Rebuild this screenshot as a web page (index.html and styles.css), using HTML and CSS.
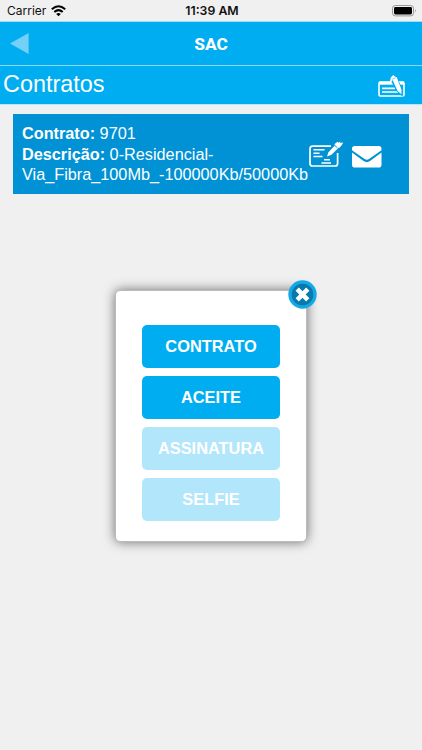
FILE: index.html
```html
<!DOCTYPE html>
<html lang="pt-BR">
<head>
<meta charset="utf-8">
<meta name="viewport" content="width=device-width, initial-scale=1">
<title>SAC</title>
<link rel="stylesheet" href="styles.css">
</head>
<body>
<div class="status">
  <div class="carrier"><span>Carrier</span>
    <svg class="wifi" width="15" height="12" viewBox="0 0 15 12" fill="none" stroke="#000" stroke-width="2"><path d="M.8 4.3Q7.5-1.8 14.2 4.3M3.3 7Q7.5 3.3 11.7 7"/><path d="M7.5 11.2 5.2 8.9Q7.5 7 9.8 8.9Z" fill="#000" stroke="none"/></svg>
  </div>
  <time class="clock">11:39 AM</time>
  <svg class="battery" width="25" height="12" viewBox="0 0 25 12"><rect x=".5" y=".5" width="21" height="10.4" rx="2.8" fill="none" stroke="#999"/><rect x="2" y="2" width="18" height="7.4" rx="1.4"/><path d="M23 4q1.5 1.7 0 3.4z" fill="#888"/></svg>
</div>
<header class="topbar">
  <svg class="back" width="19" height="22" viewBox="0 0 19 22"><path d="M0 10.5 18.6 0v21z" fill="#73d0f7"/></svg>
  <h1 class="title">SAC</h1>
</header>
<div class="subbar">
  <h2 class="heading">Contratos</h2>
  <svg class="sign" width="27" height="23" viewBox="0 0 27 23" fill="none" stroke="#fff"><rect x="1" y="7" width="25" height="14" rx="1.2" stroke-width="1.6"/><path d="M1.5 8.2H26" stroke-width="3"/><path d="M4 13.3h13M4 17h16" stroke-width="1.7"/><path d="m12.8 3.4 3.6-2.4 1.8 2 5 11.5.2 4.5-3.6-3.2z" fill="#fff" stroke="#00adf0" stroke-width="2.4"/><path d="m12.8 2.4 2.4-2.4 2 1.8 1.6.4 4.6 12.3.1 4.8-3.9-3.4L14.6 5l-2 3-.8-.6z" fill="#fff" stroke="none"/><path d="m14.2 4.3 3.3-1.4" stroke="#00adf0" stroke-width=".6"/></svg>
</div>
<main class="content">
  <article class="card">
    <div class="info">
      <p><b class="label">Contrato:</b> 9701</p>
      <p><b class="label">Descrição:</b> 0-Residencial-</p>
      <p>Via_Fibra_100Mb_-100000Kb/50000Kb</p>
    </div>
    <svg class="edit" width="35" height="27" viewBox="0 0 35 27" fill="none" stroke="#fff"><path d="M22 5.2H3.5Q1 5.2 1 7.7v14.8Q1 25 3.5 25h22.6q2.5 0 2.5-2.5V12" stroke-width="1.7"/><path d="M4.5 8.8h11M4.5 12.2h6M4.5 15.6h9M15 18.8h6M12.5 22h9.5" stroke-width="1.5"/><path d="m18 15.4 1.5-4.2 6.5-7 3.4 2.7-6.9 6.9z" fill="#fff" stroke="none"/><path d="m25.2 3.3 3.5-2.5 1.1.9L31.5.2l-.5 1.8 3.2-.6-1 2.2-2.4 3-1.5.5z" fill="#fff" stroke="none"/><path d="m25 4.2 3.4 2.9" stroke="#0092d5" stroke-width=".6"/></svg>
    <svg class="mail" width="30" height="22" viewBox="0 0 30 22" fill="#fff"><path d="M2.8 0h23.9q2.8 0 2.8 2.7v1.5L17 13q-2.2 1.5-4.4 0L0 4.2V2.7Q0 0 2.8 0z"/><path d="m0 6.6 11.6 8.4q3.2 2.3 6.4 0l11.5-8.4v12.1q0 2.8-2.8 2.8H2.8Q0 21.5 0 18.7z"/></svg>
  </article>
</main>
<section class="modal">
  <button class="action">CONTRATO</button>
  <button class="action">ACEITE</button>
  <button class="action off">ASSINATURA</button>
  <button class="action off">SELFIE</button>
  <button class="close" aria-label="Fechar"><svg width="29" height="29" viewBox="0 0 29 29"><circle cx="14.5" cy="14.5" r="12.5" fill="#0779aa" stroke="#12a9e6" stroke-width="3.4"/><path d="m9.2 9.2 10.6 10.6M19.8 9.2 9.2 19.8" stroke="#fff" stroke-width="4.6"/></svg></button>
</section>
</body>
</html>
```
FILE: styles.css
```css
* { box-sizing: border-box; }
body {
  margin: 0;
  height: 750px;
  overflow: hidden;
  position: relative;
  background: #f0f0f0;
  color: #fff;
  font-family: "Liberation Sans", Arial, sans-serif;
}
h1, h2, p { margin: 0; }
svg { display: block; flex: none; }
.status {
  height: 22px;
  padding: 0 5px 0 7px;
  display: grid;
  grid-template-columns: 1fr auto 1fr;
  align-items: center;
  color: #111;
  font: 12px/22px Inter, sans-serif;
  border-bottom: 1px solid #a5daf0;
}
.carrier { display: flex; align-items: center; gap: 5px; }
.wifi { margin-top: -1px; }
.clock { font-weight: 600; font-size: 12.3px; }
.battery { justify-self: end; margin-top: -1px; }
.topbar {
  height: 44px;
  padding-left: 10px;
  display: grid;
  grid-template-columns: 1fr auto 1fr;
  align-items: center;
  background: #00adf0;
  border-bottom: 1px solid #8bd8f6;
}
.title {
  padding-right: 10px;
  font: 800 17.3px/20px Roboto, sans-serif;
}
.subbar {
  height: 39px;
  padding: 0 17px 3px 3px;
  display: flex;
  justify-content: space-between;
  align-items: center;
  background: #00adf0;
  border-bottom: 1px solid #b5e7fb;
}
.heading { font-size: 23.4px; line-height: 28px; font-weight: 400; }
.sign { margin-top: 6px; }
.content { padding: 9px 13px; }
.card {
  height: 80px;
  padding: 9px 9px 0;
  display: flex;
  background: #0092d5;
}
.info { width: 287px; flex: none; font-size: 16.25px; line-height: 20.5px; white-space: nowrap; }
.edit { margin: 18px 0 0; }
.mail { margin: 23px 0 0 8px; }
.modal {
  position: absolute;
  left: 115px;
  top: 290px;
  width: 192px;
  height: 252px;
  padding: 34px 26px 0;
  display: flex;
  flex-direction: column;
  gap: 8.1px;
  background: #fff;
  border: 1px solid #bbb;
  border-radius: 5px;
  box-shadow: 0 0 12px rgba(0, 0, 0, .55);
}
.action {
  height: 43px;
  flex: none;
  padding: 0;
  border: 0;
  border-radius: 5px;
  background: #00adf0;
  color: #fff;
  font: 700 16.4px/43px "Liberation Sans", Arial, sans-serif;
}
.off { background: #b2e6fb; }
.close {
  position: absolute;
  top: -11px;
  right: -11px;
  padding: 0;
  border: 0;
  background: none;
}
```
